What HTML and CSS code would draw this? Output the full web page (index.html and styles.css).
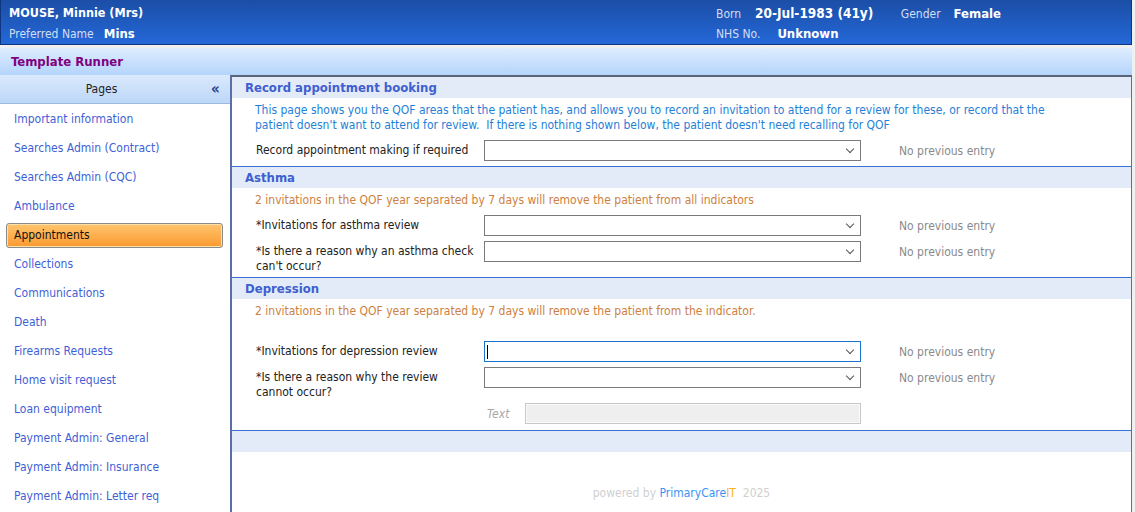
FILE: index.html
```html
<!DOCTYPE html>
<html lang="en">
<head>
    <meta charset="UTF-8">
    <meta name="viewport" content="width=device-width, initial-scale=1.0">
    <title>Template Runner</title>
    <link rel="stylesheet" href="styles.css">
</head>
<body>
    <div class="patient-banner">
        <div class="banner-row">
            <div class="banner-left"><span class="patient-name">MOUSE, Minnie (Mrs)</span></div>
            <div class="banner-right">
                <span class="lbl born-lbl">Born</span><span class="val born">20-Jul-1983 (41y)</span>
                <span class="lbl gender">Gender</span><span class="val">Female</span>
            </div>
        </div>
        <div class="banner-row">
            <div class="banner-left"><span class="lbl pref">Preferred Name</span><span class="val">Mins</span></div>
            <div class="banner-right">
                <span class="lbl nhs">NHS No.</span><span class="val">Unknown</span>
            </div>
        </div>
    </div>

    <div class="app-title">Template Runner</div>

    <div class="workspace">
        <div class="sidebar">
            <div class="pages-head">
                <span class="pages-title">Pages</span>
                <span class="collapse">&laquo;</span>
            </div>
            <ul class="page-list">
                <li>Important information</li>
                <li>Searches Admin (Contract)</li>
                <li>Searches Admin (CQC)</li>
                <li>Ambulance</li>
                <li class="active">Appointments</li>
                <li>Collections</li>
                <li>Communications</li>
                <li>Death</li>
                <li>Firearms Requests</li>
                <li>Home visit request</li>
                <li>Loan equipment</li>
                <li>Payment Admin: General</li>
                <li>Payment Admin: Insurance</li>
                <li>Payment Admin: Letter req</li>
            </ul>
        </div>

        <div class="main">
            <div class="section">
                <div class="section-head">Record appointment booking</div>
                <p class="info">This page shows you the QOF areas that the patient has, and allows you to record an invitation to attend for a review for these, or record that the patient doesn't want to attend for review.&nbsp; If there is nothing shown below, the patient doesn't need recalling for QOF</p>
                <div class="form-row">
                    <label>Record appointment making if required</label>
                    <div class="select"><span class="chev"></span></div>
                    <span class="prev">No previous entry</span>
                </div>
            </div>

            <div class="section">
                <div class="section-head">Asthma</div>
                <p class="info warn">2 invitations in the QOF year separated by 7 days will remove the patient from all indicators</p>
                <div class="form-row">
                    <label>*Invitations for asthma review</label>
                    <div class="select"><span class="chev"></span></div>
                    <span class="prev">No previous entry</span>
                </div>
                <div class="form-row">
                    <label>*Is there a reason why an asthma check can't occur?</label>
                    <div class="select"><span class="chev"></span></div>
                    <span class="prev">No previous entry</span>
                </div>
            </div>

            <div class="section">
                <div class="section-head">Depression</div>
                <p class="info warn spaced">2 invitations in the QOF year separated by 7 days will remove the patient from the indicator.</p>
                <div class="form-row">
                    <label>*Invitations for depression review</label>
                    <div class="select focused"><span class="caret"></span><span class="chev"></span></div>
                    <span class="prev">No previous entry</span>
                </div>
                <div class="form-row">
                    <label>*Is there a reason why the review cannot occur?</label>
                    <div class="select"><span class="chev"></span></div>
                    <span class="prev">No previous entry</span>
                </div>
                <div class="text-row">
                    <span class="text-lbl">Text</span>
                    <div class="text-box"></div>
                </div>
            </div>

            <div class="section-foot"></div>

            <div class="powered">powered by <span class="brand">PrimaryCare<span class="it">IT</span></span>&nbsp; 2025</div>
        </div>
    </div>
</body>
</html>
```

FILE: styles.css
```css
body {
    margin: 0;
    background: #f0f0f0;
    font-family: "DejaVu Sans Condensed", "DejaVu Sans", sans-serif;
    font-size: 12px;
    height: 512px;
    overflow: hidden;
}
.patient-banner {
    margin-right: 3px;
    height: 42px;
    padding: 2px 0 0 8px;
    background: linear-gradient(#1b4ea6, #2468d8);
    border: 1px solid #0e3580;
    border-top: none;
    color: #fff;
}
.banner-row {
    display: flex;
    height: 21px;
    align-items: center;
}
.banner-left {
    width: 707px;
}
.patient-name {
    font-weight: bold;
    font-size: 12.5px;
}
.lbl {
    color: #d4def2;
}
.val {
    font-weight: bold;
    font-size: 13px;
}
.pref {
    margin-right: 10px;
}
.born-lbl {
    margin-right: 14px;
}
.born {
    font-size: 13.5px;
    margin-right: 24px;
}
.gender {
    margin-right: 13px;
}
.nhs {
    margin-right: 17px;
}
.app-title {
    margin: 3px 3px 0 0;
    height: 27px;
    line-height: 28px;
    padding-left: 11px;
    background: linear-gradient(#deedff, #b4d4fb);
    color: #800080;
    font-weight: bold;
    font-size: 13px;
}
.workspace {
    display: flex;
    height: 437px;
}
.sidebar {
    width: 230px;
    background: #fff;
}
.pages-head {
    display: flex;
    height: 28px;
    line-height: 29px;
    background: linear-gradient(#dbe9fc, #bcd7f8);
    border-bottom: 1px solid #9fb9de;
    color: #222;
}
.pages-title {
    flex: 1;
    text-align: center;
    padding-right: 8px;
}
.collapse {
    width: 19px;
    color: #263f8a;
    font-size: 15px;
    font-weight: bold;
}
.page-list {
    display: flex;
    flex-direction: column;
    list-style: none;
    margin: 0;
    padding: 1px 0 0;
}
.page-list li {
    margin: 2px 6px;
    height: 25px;
    line-height: 25px;
    padding-left: 8px;
    color: #3f5fd6;
    box-sizing: border-box;
}
.page-list li.active {
    margin-right: 7px;
    color: #111;
    background: linear-gradient(#ffc56e, #fb9a30);
    border: 1px solid #8a8a8a;
    border-radius: 3px;
    padding-left: 7px;
    line-height: 23px;
    box-shadow: inset 0 0 0 1px #ffe0a8;
}
.main {
    flex: 1;
    margin-right: 3px;
    background: #fff;
    border-top: 2px solid #5a6478;
    border-left: 2px solid #5a6fa6;
    border-right: 1px solid #6a7080;
}
.section {
    border-bottom: 1px solid #3a6fd6;
}
.section-head {
    height: 21px;
    line-height: 21px;
    padding-left: 13px;
    background: #e3ebf8;
    color: #3e5fcf;
    font-weight: bold;
    font-size: 13px;
}
.info {
    margin: 5px 0 0 23px;
    padding-right: 60px;
    line-height: 15px;
    color: #1f80d8;
}
.info.warn {
    color: #cd8040;
}
.info.spaced {
    margin-bottom: 22px;
}
.form-row {
    display: grid;
    grid-template-columns: 228px 377px auto;
    align-items: start;
    margin: 7px 0 5px 24px;
}
.form-row + .form-row {
    margin-top: 0;
}
.form-row label {
    color: #222;
    line-height: 15px;
    padding: 3px 7px 0 0;
    margin-bottom: -2px;
}
.select {
    position: relative;
    height: 21px;
    border: 1px solid #7a7a7a;
    box-sizing: border-box;
    background: #fff;
}
.select.focused {
    border-color: #1a72d0;
}
.chev {
    position: absolute;
    right: 7px;
    top: 5px;
    width: 5px;
    height: 5px;
    border-right: 1px solid #555;
    border-bottom: 1px solid #555;
    transform: rotate(45deg);
}
.caret {
    position: absolute;
    left: 2px;
    top: 3px;
    width: 1px;
    height: 14px;
    background: #000;
}
.prev {
    margin-left: 38px;
    padding-top: 1px;
    line-height: 20px;
    color: #8a8a8a;
}
.text-row {
    display: flex;
    align-items: center;
    margin: 0 0 6px 255px;
}
.text-lbl {
    width: 38px;
    color: #a8a8a8;
    font-style: italic;
}
.text-box {
    width: 336px;
    height: 21px;
    box-sizing: border-box;
    border: 1px solid #c8c8c8;
    background: #efefef;
    box-shadow: inset 0 0 0 1px #fafafa;
}
.section-foot {
    height: 21px;
    background: #e3ebf8;
}
.powered {
    margin-top: 34px;
    text-align: center;
    color: #d0d0d0;
}
.brand {
    color: #3894f6;
}
.it {
    color: #f8b418;
}
```
